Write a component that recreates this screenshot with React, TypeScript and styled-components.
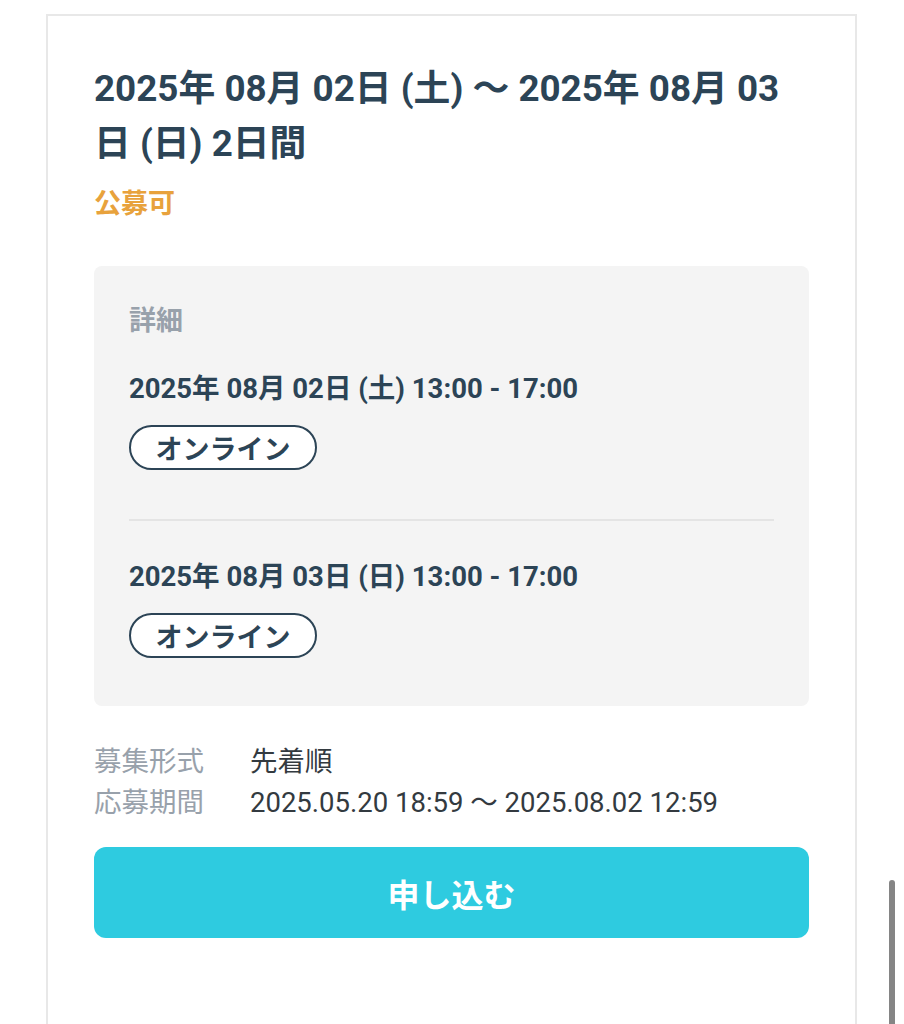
import React, { FC } from "react";
import styled, { createGlobalStyle } from "styled-components";

interface Session {
  id: number;
  date: string;
  place: string;
}

const sessions: Session[] = [
  { id: 1, date: "2025年 08月 02日 (土) 13:00 - 17:00", place: "オンライン" },
  { id: 2, date: "2025年 08月 03日 (日) 13:00 - 17:00", place: "オンライン" },
];

const App: FC = () => {
  return (
    <>
      <GlobalStyle />
      <Page>
        <Card>
          <Title>2025年 08月 02日 (土) 〜 2025年 08月 03日 (日) 2日間</Title>
          <Badge>公募可</Badge>
          <DetailBox>
            <DetailLabel>詳細</DetailLabel>
            {sessions.map((s, i) => (
              <Session key={s.id} $first={i === 0}>
                <SessionDate>{s.date}</SessionDate>
                <Pill>{s.place}</Pill>
              </Session>
            ))}
          </DetailBox>
          <InfoList>
            <InfoRow>
              <InfoLabel>募集形式</InfoLabel>
              <InfoValue>先着順</InfoValue>
            </InfoRow>
            <InfoRow>
              <InfoLabel>応募期間</InfoLabel>
              <InfoValue>2025.05.20 18:59 〜 2025.08.02 12:59</InfoValue>
            </InfoRow>
          </InfoList>
          <ApplyButton type="button">申し込む</ApplyButton>
        </Card>
      </Page>
      <ScrollThumb />
    </>
  );
};

export default App;

const GlobalStyle = createGlobalStyle`
  html, body {
    margin: 0;
    padding: 0;
    background: #fff;
    overflow: hidden;
  }
  body {
    font-family: Roboto, "Noto Sans CJK JP", sans-serif;
    color: #2c4456;
  }
`;

const Page = styled.div`
  padding: 14px 0 0 46px;
  width: 811px;
`;

const Card = styled.div`
  border: 2px solid #e8e8e8;
  border-bottom: none;
  padding: 45px 46px 120px;
  min-height: 1000px;
`;

const Title = styled.h1`
  margin: 0;
  font-size: 36.8px;
  line-height: 55px;
  font-weight: 700;
  color: #2c4456;
`;

const Badge = styled.div`
  margin-top: 13px;
  font-size: 27px;
  line-height: 40px;
  font-weight: 700;
  color: #e8a23c;
`;

const DetailBox = styled.div`
  margin-top: 42px;
  background: #f4f4f4;
  border-radius: 8px;
  padding: 37px 35px 48px;
`;

const DetailLabel = styled.div`
  font-size: 27px;
  line-height: 36px;
  font-weight: 700;
  color: #98a1ab;
`;

const Session = styled.div<{ $first: boolean }>`
  display: flex;
  flex-direction: column;
  align-items: flex-start;
  gap: 19px;
  padding-top: ${(p) => (p.$first ? "33px" : "39px")};
  padding-bottom: ${(p) => (p.$first ? "49px" : "0")};
  border-bottom: ${(p) => (p.$first ? "2px solid #e4e4e4" : "none")};
`;

const SessionDate = styled.div`
  font-size: 27.5px;
  line-height: 34px;
  font-weight: 700;
  color: #2c4456;
`;

const Pill = styled.span`
  display: inline-flex;
  align-items: center;
  justify-content: center;
  box-sizing: border-box;
  height: 45px;
  width: 188px;
  border: 2px solid #2c4456;
  border-radius: 23px;
  background: #fff;
  font-size: 27px;
  font-weight: 700;
  color: #2c4456;
`;

const InfoList = styled.div`
  margin-top: 35px;
  display: flex;
  flex-direction: column;
`;

const InfoRow = styled.div`
  display: flex;
  font-size: 27.5px;
  line-height: 41px;
`;

const InfoLabel = styled.span`
  width: 156px;
  color: #98a1ab;
`;

const InfoValue = styled.span`
  color: #333a40;
`;

const ApplyButton = styled.button`
  margin-top: 24px;
  width: 100%;
  height: 91px;
  border: none;
  border-radius: 12px;
  background: #2ecbe0;
  color: #fff;
  font-family: inherit;
  font-size: 32px;
  font-weight: 700;
  cursor: pointer;
`;

const ScrollThumb = styled.div`
  position: fixed;
  left: 889px;
  top: 880px;
  width: 6px;
  height: 160px;
  border-radius: 3px;
  background: #858585;
`;
